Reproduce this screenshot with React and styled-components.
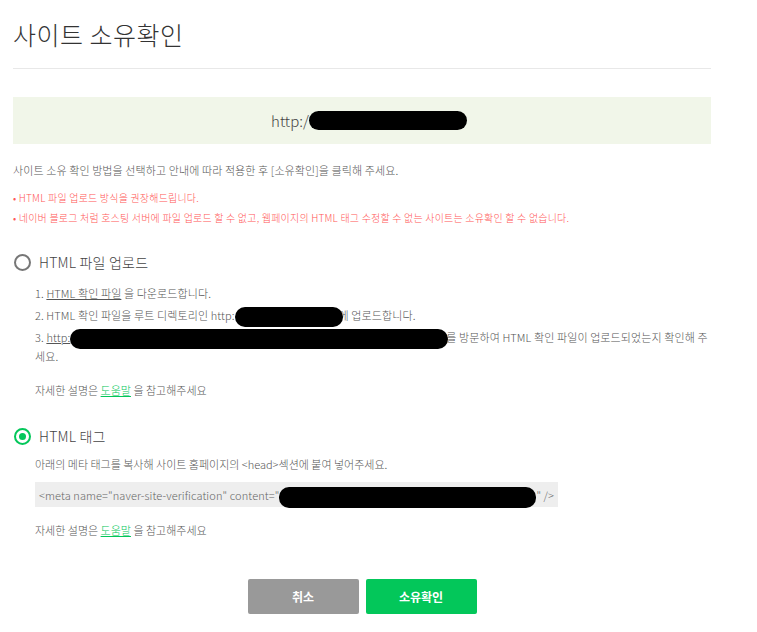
import styled, { createGlobalStyle } from "styled-components";

const GlobalStyle = createGlobalStyle`
  body {
    margin: 0;
    background: #fff;
    font-family: "Noto Sans CJK KR", "Noto Sans", sans-serif;
    font-weight: 300;
    color: #555;
  }
`;

const Page = styled.div`
  width: 698px;
  padding: 16px 0 0 13px;
`;

const Title = styled.h1`
  margin: 0;
  font-size: 25px;
  font-weight: 300;
  line-height: 36px;
  letter-spacing: 0.5px;
  color: #333;
  padding-bottom: 16px;
  border-bottom: 1px solid #e8e8e8;
`;

const UrlBox = styled.div`
  margin-top: 28px;
  height: 47px;
  background: #f1f6e9;
  display: flex;
  align-items: center;
  justify-content: center;
  font-size: 15px;
  color: #444;
  padding-left: 14px;
`;

const Redacted = styled.span`
  display: inline-block;
  width: ${(p) => p.$w}px;
  height: ${(p) => p.$h || 19}px;
  margin: -4px ${(p) => p.$mr || 0}px -4px ${(p) => p.$ml || 0}px;
  background: #000;
  border-radius: 10px;
  vertical-align: middle;
  position: relative;
  top: ${(p) => p.$top || 0}px;
`;

const Intro = styled.p`
  margin: 17px 0 0;
  font-size: 11px;
  line-height: 18px;
  letter-spacing: 0.1px;
  color: #555;
`;

const Notes = styled.ul`
  list-style: none;
  margin: 9px 0 0;
  padding: 0;
`;

const Note = styled.li`
  font-size: 10px;
  line-height: 20px;
  letter-spacing: 0.2px;
  color: #ff5757;

  &::before {
    content: "• ";
  }
`;

const Option = styled.section`
  margin-top: ${(p) => p.$mt}px;
`;

const RadioRow = styled.label`
  display: flex;
  align-items: center;
  gap: 8px;
  margin-left: 1px;
  font-size: 14px;
  line-height: 20px;
  letter-spacing: 0.2px;
  color: #444;
`;

const Radio = styled.span`
  width: 17px;
  height: 17px;
  box-sizing: border-box;
  border-radius: 50%;
  border: 2px solid ${(p) => (p.$on ? "#03c75a" : "#777")};
  display: flex;
  align-items: center;
  justify-content: center;

  &::after {
    content: "";
    display: ${(p) => (p.$on ? "block" : "none")};
    width: 7px;
    height: 7px;
    border-radius: 50%;
    background: #03c75a;
  }
`;

const Body = styled.div`
  padding-left: 22px;
  font-size: 11px;
  color: #555;
`;

const Steps = styled.ol`
  list-style: none;
  margin: 12px 0 0;
  padding: 0;
`;

const Step = styled.li`
  line-height: 19px;
  letter-spacing: 0.1px;
  white-space: nowrap;
  & + & {
    margin-top: 3px;
  }
`;

const Under = styled.span`
  text-decoration: underline;
  color: #555;
`;

const Help = styled.p`
  margin: ${(p) => p.$mt}px 0 0;
  line-height: 19px;
`;

const HelpLink = styled.a`
  color: #03c75a;
  text-decoration: underline;
`;

const Desc = styled.p`
  margin: 9px 0 0;
  line-height: 19px;
`;

const Code = styled.div`
  margin-top: 8px;
  width: 523px;
  height: 25px;
  box-sizing: border-box;
  background: #eee;
  padding: 0 4px;
  display: flex;
  align-items: center;
  font-size: 11px;
  letter-spacing: 0.1px;
  color: #666;
  white-space: nowrap;
`;

const Actions = styled.div`
  margin-top: 39px;
  display: flex;
  justify-content: center;
  gap: 7px;
`;

const Button = styled.button`
  width: 111px;
  height: 35px;
  border: 0;
  border-radius: 2px;
  background: ${(p) => (p.$primary ? "#03c75a" : "#999")};
  color: #fff;
  font-family: "Noto Sans CJK KR", sans-serif;
  font-size: 12px;
  font-weight: 700;
  cursor: pointer;
`;

export default function App() {
  return (
    <>
      <GlobalStyle />
      <Page>
        <Title>사이트 소유확인</Title>

        <UrlBox>
          http:/
          <Redacted $w={158} $h={19} />
        </UrlBox>

        <Intro>
          사이트 소유 확인 방법을 선택하고 안내에 따라 적용한 후 [소유확인]을 클릭해 주세요.
        </Intro>
        <Notes>
          <Note>HTML 파일 업로드 방식을 권장해드립니다.</Note>
          <Note>
            네이버 블로그 처럼 호스팅 서버에 파일 업로드 할 수 없고, 웹페이지의 HTML 태그 수정할 수 없는
            사이트는 소유확인 할 수 없습니다.
          </Note>
        </Notes>

        <Option $mt={24}>
          <RadioRow>
            <Radio />
            HTML 파일 업로드
          </RadioRow>
          <Body>
            <Steps>
              <Step>
                1. <Under>HTML 확인 파일</Under> 을 다운로드합니다.
              </Step>
              <Step>
                2. HTML 확인 파일을 루트 디렉토리인 http:
                <Redacted $w={108} $h={20} $mr={-4} />에 업로드합니다.
              </Step>
              <Step>
                3. <Under>http:</Under>
                <Redacted $w={378} $h={20} $mr={-2} />를 방문하여 HTML 확인 파일이 업로드되었는지 확인해 주
                <br />
                세요.
              </Step>
            </Steps>
            <Help $mt={15}>
              자세한 설명은 <HelpLink>도움말</HelpLink> 을 참고해주세요
            </Help>
          </Body>
        </Option>

        <Option $mt={26}>
          <RadioRow>
            <Radio $on />
            HTML 태그
          </RadioRow>
          <Body>
            <Desc>아래의 메타 태그를 복사해 사이트 홈페이지의 &lt;head&gt;섹션에 붙여 넣어주세요.</Desc>
            <Code>
              &lt;meta name="naver-site-verification" content="
              <Redacted $w={264} $h={21} $top={3} />" /&gt;
            </Code>
            <Help $mt={14}>
              자세한 설명은 <HelpLink>도움말</HelpLink> 을 참고해주세요
            </Help>
          </Body>
        </Option>

        <Actions>
          <Button>취소</Button>
          <Button $primary>소유확인</Button>
        </Actions>
      </Page>
    </>
  );
}
